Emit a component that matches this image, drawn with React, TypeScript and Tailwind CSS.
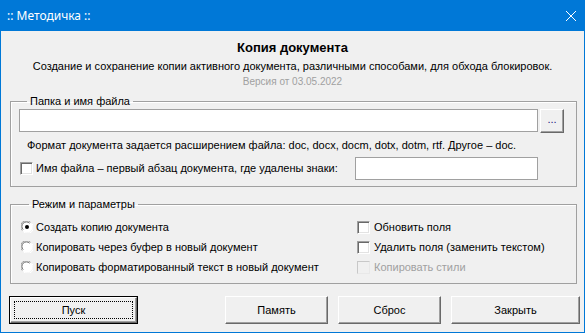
import React from 'react';

const font = "font-['Liberation_Sans',Arial,sans-serif]";

const CheckBox = ({ disabled }: { disabled?: boolean }) => (
  <span
    className={`block w-[13px] h-[13px] shrink-0 border ${
      disabled
        ? 'bg-[#f0f0f0] border-[#c8c8c8] border-r-[#e8e8e8] border-b-[#e8e8e8]'
        : 'bg-white border-[#a0a0a0] border-r-white border-b-white shadow-[inset_1px_1px_0_#696969,inset_-1px_-1px_0_#e3e3e3]'
    }`}
  />
);

const Radio = ({ checked }: { checked?: boolean }) => (
  <svg width="12" height="12" viewBox="0 0 12 12" className="shrink-0">
    <circle cx="6" cy="6" r="5.5" fill="#fff" />
    <path d="M1.3 9.5 A5.5 5.5 0 0 1 9.5 1.3" stroke="#a0a0a0" strokeWidth="1" fill="none" />
    <path d="M2.2 8.6 A4.5 4.5 0 0 1 8.6 2.2" stroke="#696969" strokeWidth="1" fill="none" />
    <path d="M10.7 2.5 A5.5 5.5 0 0 1 2.5 10.7" stroke="#fff" strokeWidth="1" fill="none" />
    {checked && <circle cx="6" cy="6" r="2" fill="#000" />}
  </svg>
);

const Btn = ({ label, w, def }: { label: string; w: string; def?: boolean }) => (
  <button
    className={`${w} h-[28px] bg-[#f0f0f0] text-[11px] text-black ${def ? 'border border-black p-0' : ''}`}
  >
    <span className="flex w-full h-full border border-white border-r-[#696969] border-b-[#696969] shadow-[inset_-1px_-1px_0_#a0a0a0] items-center justify-center">
      {def ? (
        <span className="flex items-center justify-center w-[calc(100%-6px)] h-[calc(100%-6px)] border border-dotted border-black">
          {label}
        </span>
      ) : (
        label
      )}
    </span>
  </button>
);

export default function App() {
  return (
    <div className={`${font} w-[585px] h-[333px] flex flex-col bg-[#f0f0f0] border-x border-b border-[#0078d7] text-black`}>
      <div className="h-[31px] shrink-0 bg-[#0078d7] flex items-center justify-between pl-[7px] pr-[4px] -mx-px">
        <span className="text-white text-[12px] font-['Noto_Sans',sans-serif]">:: Методичка ::</span>
        <svg width="12" height="12" viewBox="0 0 12 12" className="mr-[4px]">
          <path d="M1 1 L11 11 M11 1 L1 11" stroke="#fff" strokeWidth="1" />
        </svg>
      </div>

      <div className="flex flex-col items-center">
        <div className="mt-[9px] text-[13px] font-bold leading-[16px]">Копия документа</div>
        <div className="mt-[3px] text-[11px] leading-[14px]">
          Создание и сохранение копии активного документа, различными способами, для обхода блокировок.
        </div>
        <div className="mt-[2px] text-[10px] leading-[13px] text-[#a0a0a0]">Версия от 03.05.2022</div>
      </div>

      <fieldset className="mx-[9px] mt-[7px] w-[567px] h-[92px] border border-[#a0a0a0] shadow-[inset_1px_1px_0_#fff] pl-[8px] pr-[11px] text-[11px]">
        <legend className="ml-[8px] px-[3px] leading-[13px]">Папка и имя файла</legend>
        <div className="flex items-start gap-[2px] mt-px">
          <div className="w-[519px] h-[23px] bg-white border border-[#a0a0a0]" />
          <button className="w-[24px] h-[24px] flex items-center justify-center bg-[#f0f0f0] border border-white border-r-[#696969] border-b-[#696969] shadow-[inset_-1px_-1px_0_#a0a0a0] text-[11px] text-[#202080] pb-[3px]">
            ...
          </button>
        </div>
        <div className="mt-[6px] ml-[8px] leading-[13px]">
          Формат документа задается расширением файла: doc, docx, docm, dotx, dotm, rtf. Другое – doc.
        </div>
        <div className="flex items-center mt-[5px] h-[23px] ml-px">
          <CheckBox />
          <span className="ml-[3px] w-[319px]">Имя файла – первый абзац документа, где удалены знаки:</span>
          <div className="w-[183px] h-[23px] bg-white border border-[#a0a0a0]" />
        </div>
      </fieldset>

      <fieldset className="mx-[9px] mt-[11px] w-[567px] h-[86px] border border-[#a0a0a0] shadow-[inset_1px_1px_0_#fff] pl-[10px] text-[11px]">
        <legend className="ml-[8px] px-[3px] leading-[13px]">Режим и параметры</legend>
        <div className="flex mt-[6px]">
          <div className="flex flex-col w-[336px]">
            <div className="flex items-center h-[20px] gap-[3px]"><Radio checked />Создать копию документа</div>
            <div className="flex items-center h-[20px] gap-[3px]"><Radio />Копировать через буфер в новый документ</div>
            <div className="flex items-center h-[20px] gap-[3px]"><Radio />Копировать форматированный текст в новый документ</div>
          </div>
          <div className="flex flex-col">
            <div className="flex items-center h-[20px] gap-[4px]"><CheckBox />Обновить поля</div>
            <div className="flex items-center h-[20px] gap-[4px]"><CheckBox />Удалить поля (заменить текстом)</div>
            <div className="flex items-center h-[20px] gap-[4px] text-[#a0a0a0]"><CheckBox disabled />Копировать стили</div>
          </div>
        </div>
      </fieldset>

      <div className="flex mt-[12px] ml-[8px]">
        <Btn label="Пуск" w="w-[129px]" def />
        <div className="ml-[87px] flex gap-[10px]">
          <Btn label="Память" w="w-[103px]" />
          <Btn label="Сброс" w="w-[103px]" />
          <Btn label="Закрыть" w="w-[129px]" />
        </div>
      </div>
    </div>
  );
}
